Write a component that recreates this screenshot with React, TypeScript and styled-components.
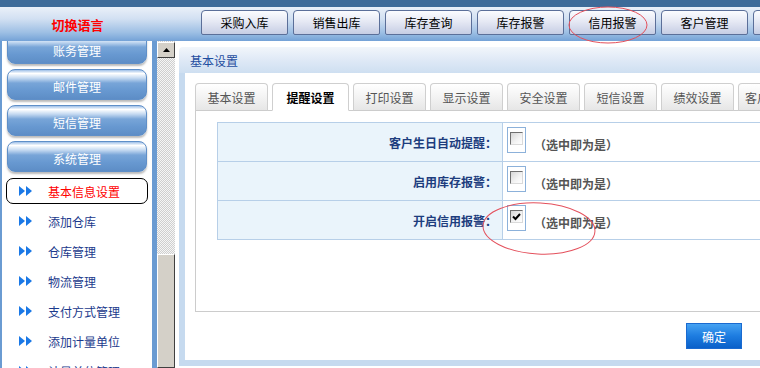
import React from "react";
import styled, { createGlobalStyle } from "styled-components";

const GlobalStyle = createGlobalStyle`
  html, body { margin: 0; padding: 0; overflow: hidden; background: #fff; }
  body { font-family: "Noto Sans CJK SC", "DejaVu Sans", sans-serif; font-size: 12px; }
  * { box-sizing: border-box; }
`;

const Page = styled.div`
  position: relative;
  width: 760px;
  height: 368px;
  overflow: hidden;
  display: flex;
  flex-direction: column;
`;

const TopStrip = styled.div`
  height: 7px;
  flex: none;
  background: #3e6b99;
`;

const Header = styled.header`
  height: 34px;
  flex: none;
  display: flex;
  overflow: hidden;
  background: linear-gradient(to bottom, #eaf0f8 0%, #d2e0f2 35%, #9dbfe4 75%, #74a2d7 100%);
`;

const LangBox = styled.div`
  width: 155px;
  flex: none;
  display: flex;
  align-items: center;
  justify-content: center;
  color: #ff0000;
  font-weight: bold;
  font-size: 13px;
`;

const Nav = styled.nav`
  display: flex;
  flex: none;
  gap: 5px;
  margin-left: 46px;
  padding-top: 3px;
`;

const NavButton = styled.div`
  width: 87px;
  height: 25px;
  flex: none;
  display: flex;
  align-items: center;
  justify-content: center;
  border: 1px solid #5b6f99;
  border-radius: 4px 4px 2px 2px;
  background: linear-gradient(to bottom, #fbfcff 0%, #e6e9f4 45%, #c6cde4 100%);
  color: #000;
  font-size: 12px;
`;

const Body = styled.div`
  flex: 1;
  display: flex;
  min-height: 0;
`;

const Sidebar = styled.aside`
  width: 157px;
  flex: none;
  background: #6a9bd2;
  padding: 0 5px 0 2px;
`;

const SidebarPanel = styled.div`
  height: 100%;
  background: #fff;
  overflow: hidden;
  padding: 0 5px;
`;

const MenuStack = styled.div`
  display: flex;
  flex-direction: column;
  gap: 5px;
  margin-top: -8px;
`;

const MenuButton = styled.div`
  height: 31px;
  border-radius: 8px;
  display: flex;
  align-items: center;
  justify-content: center;
  padding-top: 3px;
  color: #fff;
  font-size: 12px;
  border: 1px solid #5f8fc8;
  background: linear-gradient(
    to bottom,
    #9fc0e8 0%,
    #ffffff 12%,
    #c4d9f1 28%,
    #78a5d8 45%,
    #6899d1 70%,
    #5d8dc6 100%
  );
  box-shadow: 0 2px 2px rgba(60, 60, 60, 0.35);
`;

const SubList = styled.div`
  display: flex;
  flex-direction: column;
  gap: 4px;
  margin: 6px -1px 0 -1px;
`;

const SubItem = styled.div<{ $active?: boolean }>`
  height: 26px;
  display: flex;
  align-items: center;
  gap: 16px;
  padding-left: 12px;
  border: 1px solid ${(p) => (p.$active ? "#000" : "transparent")};
  border-radius: 7px;
  color: ${(p) => (p.$active ? "#ff0000" : "#1b3a8c")};
  font-size: 12px;
  white-space: nowrap;
`;

const ScrollTrack = styled.div`
  width: 18px;
  flex: none;
  display: flex;
  flex-direction: column;
  background: repeating-conic-gradient(#cfcfcf 0 25%, #f6f6f6 0 50%) 0 0 / 2px 2px;
`;

const ScrollUp = styled.div`
  height: 16px;
  margin-top: 1px;
  background: #d4d0c8;
  border: 1px solid;
  border-color: #fff #404040 #404040 #fff;
  display: flex;
  align-items: center;
  justify-content: center;
`;

const ScrollSpacer = styled.div`
  flex: 1;
`;

const ScrollThumb = styled.div`
  height: 114px;
  background: #d4d0c8;
  border: 1px solid;
  border-color: #fff #404040 #404040 #fff;
`;

const Main = styled.main`
  flex: 1;
  background: #fff;
  padding: 6px 0 0 4px;
  overflow: hidden;
`;

const Frame = styled.section`
  width: 620px;
`;

const TitleBar = styled.div`
  height: 26px;
  display: flex;
  align-items: center;
  padding-left: 11px;
  color: #1f4ea0;
  font-size: 12px;
  border-radius: 4px 0 0 0;
  background: linear-gradient(to bottom, #f2f6fb 0%, #dfe9f6 50%, #cedff1 100%);
`;

const FrameBody = styled.div`
  height: 293px;
  border-left: 6px solid #c6daef;
  border-bottom: 6px solid #c6daef;
  background: #fff;
  padding: 10px 0 0 10px;
`;

const Tabs = styled.div`
  display: flex;
  gap: 4px;
  height: 28px;
  position: relative;
  z-index: 1;
  margin-bottom: -1px;
`;

const Tab = styled.div<{ $active?: boolean }>`
  min-width: ${(p) => (p.$active ? "77px" : "73px")};
  height: 28px;
  padding: 0 6px;
  display: flex;
  align-items: center;
  justify-content: center;
  border: 1px solid #cfcfcf;
  border-bottom-color: ${(p) => (p.$active ? "#fff" : "#cccccc")};
  border-radius: 4px 4px 0 0;
  background: ${(p) => (p.$active ? "#fff" : "linear-gradient(to bottom, #ffffff 0%, #f3f3f3 50%, #e6e6e6 100%)")};
  color: ${(p) => (p.$active ? "#000" : "#555")};
  font-weight: ${(p) => (p.$active ? "bold" : "normal")};
  font-size: 12px;
  white-space: nowrap;
  flex: none;
`;

const Panel = styled.div`
  height: 202px;
  border: 1px solid #cccccc;
  padding: 11px 0 0 21px;
`;

const Table = styled.table`
  border-collapse: collapse;
  width: 560px;
`;

const Row = styled.tr`
  height: 39px;
`;

const LabelCell = styled.td`
  width: 285px;
  background: #eaf4fb;
  border: 1px solid #b7cfe8;
  text-align: right;
  padding: 0 5px 0 0;
  font-weight: bold;
  color: #1d3d7e;
  font-size: 12px;
`;

const ValueCell = styled.td`
  border: 1px solid #b7cfe8;
  background: #fff;
  vertical-align: top;
  padding: 4px 0 0 4px;
`;

const ValueInner = styled.div`
  display: flex;
  align-items: flex-end;
  gap: 8px;
`;

const CheckFrame = styled.div`
  width: 19px;
  height: 26px;
  border: 1px solid #8cb1da;
  padding: 4px 0 0 2px;
`;

const CheckBox = styled.div`
  width: 13px;
  height: 13px;
  border: 1px solid;
  border-color: #6f6f6f #dadada #dadada #6f6f6f;
  background: linear-gradient(135deg, #d6d6d6 0%, #f4f4f4 60%, #ffffff 100%);
  display: flex;
  align-items: center;
  justify-content: center;
`;

const Hint = styled.span`
  color: #555;
  font-weight: bold;
  font-size: 12px;
  line-height: 16px;
`;

const Footer = styled.div`
  margin: 11px 0 0 491px;
`;

const SubmitButton = styled.div`
  width: 56px;
  height: 26px;
  display: flex;
  align-items: center;
  justify-content: center;
  color: #fff;
  font-size: 12px;
  border: 1px solid #1a6ad0;
  background: linear-gradient(to bottom, #45a2f2 0%, #1d7ce0 50%, #0a60c9 100%);
`;

const Overlay = styled.svg`
  position: absolute;
  left: 0;
  top: 0;
  pointer-events: none;
`;

const Arrow = () => (
  <svg width="13" height="10" viewBox="0 0 13 10">
    <polygon points="0,0 6,5 0,10" fill="#1a78e6" />
    <polygon points="7,0 13,5 7,10" fill="#1a78e6" />
  </svg>
);

const Check = ({ checked }: { checked?: boolean }) => (
  <CheckFrame>
    <CheckBox>
      {checked && (
        <svg width="9" height="8" viewBox="0 0 9 8">
          <path d="M1 3.5 L3.5 6 L8 1" stroke="#000" strokeWidth="2" fill="none" />
        </svg>
      )}
    </CheckBox>
  </CheckFrame>
);

const navItems = ["采购入库", "销售出库", "库存查询", "库存报警", "信用报警", "客户管理", "系统设置"];
const menuButtons = ["账务管理", "邮件管理", "短信管理", "系统管理"];
const subItems = ["基本信息设置", "添加仓库", "仓库管理", "物流管理", "支付方式管理", "添加计量单位", "计量单位管理"];
const tabs = ["基本设置", "提醒设置", "打印设置", "显示设置", "安全设置", "短信设置", "绩效设置", "客户关怀设置"];
const rows = [
  { label: "客户生日自动提醒：", checked: false },
  { label: "启用库存报警：", checked: false },
  { label: "开启信用报警：", checked: true },
];

export default function App() {
  return (
    <>
      <GlobalStyle />
      <Page>
        <TopStrip />
        <Header>
          <LangBox>切换语言</LangBox>
          <Nav>
            {navItems.map((n) => (
              <NavButton key={n}>{n}</NavButton>
            ))}
          </Nav>
        </Header>
        <Body>
          <Sidebar>
            <SidebarPanel>
              <MenuStack>
                {menuButtons.map((m) => (
                  <MenuButton key={m}>{m}</MenuButton>
                ))}
              </MenuStack>
              <SubList>
                {subItems.map((s, i) => (
                  <SubItem key={s} $active={i === 0}>
                    <Arrow />
                    {s}
                  </SubItem>
                ))}
              </SubList>
            </SidebarPanel>
          </Sidebar>
          <ScrollTrack>
            <ScrollUp>
              <svg width="7" height="4" viewBox="0 0 7 4">
                <polygon points="0,4 3.5,0 7,4" fill="#000" />
              </svg>
            </ScrollUp>
            <ScrollSpacer />
            <ScrollThumb />
          </ScrollTrack>
          <Main>
            <Frame>
              <TitleBar>基本设置</TitleBar>
              <FrameBody>
                <Tabs>
                  {tabs.map((t, i) => (
                    <Tab key={t} $active={i === 1}>
                      {t}
                    </Tab>
                  ))}
                </Tabs>
                <Panel>
                  <Table>
                    <tbody>
                      {rows.map((r) => (
                        <Row key={r.label}>
                          <LabelCell>{r.label}</LabelCell>
                          <ValueCell>
                            <ValueInner>
                              <Check checked={r.checked} />
                              <Hint>（选中即为是）</Hint>
                            </ValueInner>
                          </ValueCell>
                        </Row>
                      ))}
                    </tbody>
                  </Table>
                </Panel>
                <Footer>
                  <SubmitButton>确定</SubmitButton>
                </Footer>
              </FrameBody>
            </Frame>
          </Main>
        </Body>
        <Overlay width="760" height="368" viewBox="0 0 760 368">
          <ellipse cx="608" cy="25" rx="39" ry="18" fill="none" stroke="#e4505c" strokeWidth="1" />
          <ellipse cx="539" cy="228.5" rx="56" ry="25.5" fill="none" stroke="#e4505c" strokeWidth="1" transform="rotate(3 539 228.5)" />
        </Overlay>
      </Page>
    </>
  );
}
